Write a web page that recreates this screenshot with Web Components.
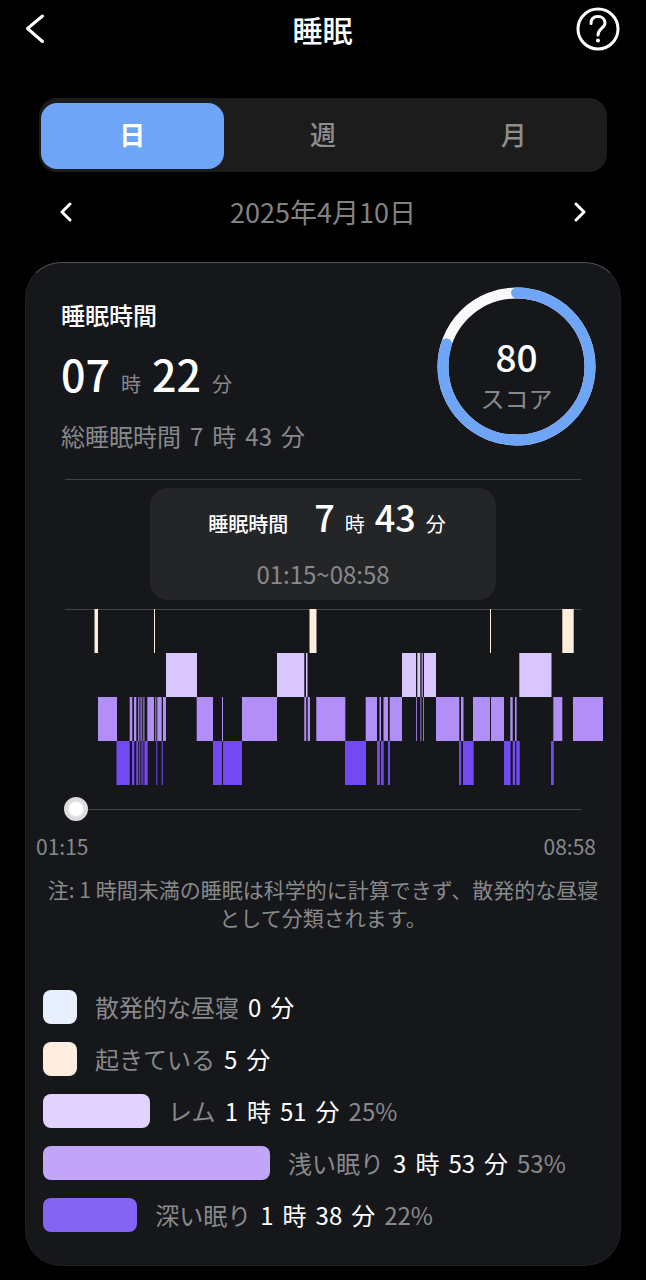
<!DOCTYPE html>
<html lang="ja">
<head>
<meta charset="utf-8">
<meta name="viewport" content="width=device-width, initial-scale=1">
<title>睡眠</title>
<style>
  body {
    margin: 0;
    background: #000;
    color: #fff;
    font-family: "Noto Sans CJK JP", sans-serif;
    --muted: #88898b;
    --accent: #6fa5f7;
    --line: #414244;
  }
</style>
</head>
<body>
<sleep-page>
  <top-bar slot="header">睡眠</top-bar>
  <period-tabs slot="header" labels="日,週,月" selected="日"></period-tabs>
  <date-nav slot="header">2025年4月10日</date-nav>

  <sleep-summary hours="07" minutes="22" total-hours="7" total-minutes="43">
    <score-ring slot="score" value="80">スコア</score-ring>
  </sleep-summary>
  <range-card hours="7" minutes="43">01:15~08:58</range-card>
  <stage-chart></stage-chart>
  <time-slider from="01:15" to="08:58"></time-slider>
  <span slot="note">注: 1 時間未満の睡眠は科学的に計算できず、散発的な昼寝として分類されます。</span>

  <stage-row slot="stages" color="#e8f0ff" value="0 分">散発的な昼寝</stage-row>
  <stage-row slot="stages" color="#ffeee0" value="5 分">起きている</stage-row>
  <stage-row slot="stages" color="#e1d2fe" value="1 時 51 分" share="25">レム</stage-row>
  <stage-row slot="stages" color="#c1a5f9" value="3 時 53 分" share="53">浅い眠り</stage-row>
  <stage-row slot="stages" color="#8465f3" value="1 時 38 分" share="22">深い眠り</stage-row>
</sleep-page>

<script>
// attaches an open shadow root holding the given markup
function attach(el, html) {
  const template = document.createElement('template');
  template.innerHTML = html;
  el.attachShadow({ mode: 'open' });
  el.shadowRoot.appendChild(template.content.cloneNode(true));
}

class SleepPage extends HTMLElement {
  constructor() {
    super();
    attach(this, `
      <style>
        :host { display: block; padding-bottom: 14px; }
        main {
          margin: 26px 25px 0;
          padding-bottom: 33px;
          border: 1px solid #1f2023;
          border-top-color: #505153;
          border-radius: 36px;
          background: #16171a;
        }
        p {
          margin: 15px 17px 0;
          font-size: 21px;
          line-height: 28px;
          text-align: center;
          color: var(--muted);
        }
        .stages {
          display: flex;
          flex-direction: column;
          gap: 18px;
          margin: 59px 17px 0;
        }
      </style>
      <slot name="header"></slot>
      <main>
        <slot></slot>
        <p><slot name="note"></slot></p>
        <div class="stages"><slot name="stages"></slot></div>
      </main>
    `);
  }
}

class TopBar extends HTMLElement {
  constructor() {
    super();
    attach(this, `
      <style>
        :host {
          display: grid;
          grid-template-columns: 1fr auto 1fr;
          align-items: center;
          height: 57px;
          padding: 0 25px 0 24px;
        }
        button {
          display: block;
          justify-self: start;
          padding: 0;
          border: 0;
          background: none;
          color: inherit;
        }
        h1 { margin: 0; font-size: 30px; line-height: 40px; font-weight: 500; }
        svg { display: block; fill: none; stroke: currentColor; stroke-linecap: round; stroke-linejoin: round; }
        .help { justify-self: end; }
      </style>
      <button aria-label="戻る">
        <svg width="24" height="32" viewBox="0 0 24 32" stroke-width="3"><path d="M18.500 3 3.500 15.500 18.500 28.500"/></svg>
      </button>
      <h1><slot></slot></h1>
      <button class="help" aria-label="ヘルプ">
        <svg width="46" height="46" viewBox="0 0 46 46" stroke-width="3">
          <circle cx="23" cy="23" r="20"/>
          <path d="M16 17.500C16 12.500 19 10.500 23 10.500S30 13 30 17C30 22 23 22.500 23 29"/>
          <circle cx="23" cy="34.500" r="2" fill="currentColor" stroke="none"/>
        </svg>
      </button>
    `);
  }
}

class PeriodTabs extends HTMLElement {
  constructor() {
    super();
    attach(this, `
      <style>
        :host {
          display: grid;
          grid-auto-flow: column;
          grid-auto-columns: 1fr;
          gap: 8px;
          margin: 41px 39px 0;
          padding: 5px 2px 3px;
          border-radius: 18px;
          background: #1c1c1c;
        }
        button {
          height: 66px;
          padding: 0 0 4px;
          border: 0;
          border-radius: 16px;
          background: none;
          color: #8e8e8e;
          font: 500 26px/36px "Noto Sans CJK JP", sans-serif;
        }
        button[aria-pressed="true"] { background: var(--accent); color: #fff; font-weight: 700; }
      </style>
    `);
    this.getAttribute('labels').split(',').forEach((label) => {
      const button = document.createElement('button');
      button.textContent = label;
      button.setAttribute('aria-pressed', label === this.getAttribute('selected'));
      button.addEventListener('click', () => this.select(button));
      this.shadowRoot.appendChild(button);
    });
  }

  select(button) {
    this.shadowRoot.querySelectorAll('button').forEach((b) => {
      b.setAttribute('aria-pressed', b === button);
    });
  }
}

class DateNav extends HTMLElement {
  constructor() {
    super();
    attach(this, `
      <style>
        :host {
          display: flex;
          align-items: center;
          justify-content: space-between;
          margin: 15px 42px 0;
          height: 49px;
          font-size: 27px;
          line-height: 40px;
          color: #828282;
        }
        button {
          display: flex;
          justify-content: center;
          width: 48px;
          padding: 0;
          border: 0;
          background: none;
          color: #fff;
        }
        svg { fill: none; stroke: currentColor; stroke-width: 3; stroke-linecap: round; stroke-linejoin: round; }
      </style>
      <button aria-label="前の日"><svg width="14" height="20" viewBox="0 0 14 20"><path d="M11 2 3 10 11 18"/></svg></button>
      <slot></slot>
      <button aria-label="次の日"><svg width="14" height="20" viewBox="0 0 14 20"><path d="M3 2 11 10 3 18"/></svg></button>
    `);
  }
}

class SleepSummary extends HTMLElement {
  constructor() {
    super();
    attach(this, `
      <style>
        :host {
          display: flex;
          justify-content: space-between;
          align-items: flex-start;
          margin: 0 39px;
          padding: 24px 0 27px;
          border-bottom: 1px solid var(--line);
        }
        .text { margin: 12px 0 0 -4px; }
        h2 { margin: 0; font-size: 24px; line-height: 32px; font-weight: 500; }
        .row { display: flex; align-items: baseline; color: var(--muted); }
        .main { gap: 11px; margin-top: 18px; font-size: 20px; line-height: 24px; }
        .main b { font-size: 43px; line-height: 48px; font-weight: 500; color: #fff; }
        .total { gap: 9px; margin-top: 23px; font-size: 24px; line-height: 32px; }
        ::slotted(*) { margin-right: -15px; }
      </style>
      <div class="text">
        <h2>睡眠時間</h2>
        <div class="row main"><b>${this.getAttribute('hours')}</b><span>時</span><b>${this.getAttribute('minutes')}</b><span>分</span></div>
        <div class="row total">
          <span>総睡眠時間</span><span>${this.getAttribute('total-hours')}</span><span>時</span><span>${this.getAttribute('total-minutes')}</span><span>分</span>
        </div>
      </div>
      <slot name="score"></slot>
    `);
  }
}

class ScoreRing extends HTMLElement {
  constructor() {
    super();
    const value = this.getAttribute('value');
    attach(this, `
      <style>
        :host { display: grid; width: 159px; height: 159px; }
        svg, .label { grid-area: 1 / 1; }
        .label {
          display: flex;
          flex-direction: column;
          align-items: center;
          padding-top: 45px;
          font-size: 24px;
          line-height: 36px;
          color: var(--muted);
        }
        b { font-size: 37px; line-height: 48px; font-weight: 500; color: #fff; }
      </style>
      <svg viewBox="0 0 160 160" fill="none" stroke-width="11" aria-hidden="true">
        <circle cx="80" cy="80" r="74" stroke="#fafafa"/>
        <circle cx="80" cy="80" r="74" stroke="#6fa5f7" stroke-linecap="round"
          pathLength="100" stroke-dasharray="${value} 100" transform="rotate(-90 80 80)"/>
      </svg>
      <div class="label"><b>${value}</b><slot></slot></div>
    `);
  }
}

class RangeCard extends HTMLElement {
  constructor() {
    super();
    attach(this, `
      <style>
        :host {
          display: block;
          width: fit-content;
          margin: 8px auto 0;
          padding: 4px 50px 10px;
          border-radius: 18px;
          background: #242527;
          text-align: center;
        }
        .row {
          display: flex;
          align-items: baseline;
          gap: 10px;
          padding-left: 8px;
          font-size: 20px;
          line-height: 24px;
        }
        h3 { margin: 0 16px 0 0; font-size: inherit; font-weight: 500; }
        b { font-size: 36px; line-height: 48px; font-weight: 500; }
        .range { margin-top: 18px; font-size: 24px; line-height: 32px; color: var(--muted); }
      </style>
      <div class="row">
        <h3>睡眠時間</h3><b>${this.getAttribute('hours')}</b><span>時</span><b>${this.getAttribute('minutes')}</b><span>分</span>
      </div>
      <div class="range"><slot></slot></div>
    `);
  }
}

// [start, end] of each stretch, on a 538 unit wide night
const STAGES = [
  { color: '#ffeedd', spans: [[29.500, 33], [89, 90], [244.500, 251.500], [425, 426], [497.300, 508.700]] },
  { color: '#d9c6fd', spans: [[101, 132], [212, 239.300], [241, 242.500], [337, 351], [352.300, 355.300], [356.700, 357.700], [359, 371], [454.300, 486.500]] },
  { color: '#b28ef7', spans: [[33, 52], [64.700, 67.300], [69, 71.300], [73, 73.800], [74.700, 75.500], [76.400, 77.200], [78.400, 79.400], [82.300, 89], [90.300, 91.300], [92.300, 96.700], [98, 101], [131.700, 148], [157, 158], [177, 212], [239.300, 241.200], [242.700, 245], [251.300, 280.300], [300.700, 312], [314.500, 316], [318.500, 323], [324.700, 337], [351.200, 352], [355.500, 356.300], [358, 358.800], [371, 394.300], [396, 398.500], [408, 425], [426, 439], [445.300, 447.700], [450, 451.600], [488.300, 497.300], [508, 538]] },
  { color: '#734af1', spans: [[51.500, 64.700], [67, 69.300], [71.300, 73.200], [74, 74.800], [75.700, 76.500], [77.300, 78.400], [79.400, 82.700], [91.300, 92.300], [96.700, 97.800], [148, 157], [158, 177], [280, 301], [312, 315], [316, 318.700], [323, 325], [394, 396.200], [398, 408.700], [439, 445.600], [447.700, 450.200], [451.400, 454.700], [486, 488.800]] }
];

class StageChart extends HTMLElement {
  constructor() {
    super();
    const bars = STAGES.map((stage, i) => stage.spans.map(([from, to]) =>
      `<path fill="${stage.color}" d="M${from} ${i * 44}H${to}v44H${from}z"/>`).join('')).join('');
    attach(this, `
      <style>
        :host { display: block; margin: 9px 17px 0 39px; }
        svg { display: block; width: 100%; height: 176px; }
      </style>
      <svg viewBox="0 0 538 176" preserveAspectRatio="none" role="img" aria-label="睡眠ステージ">
        <path d="M0 0H516V1H0z" fill="#414244"/>
        ${bars}
      </svg>
    `);
  }
}

class TimeSlider extends HTMLElement {
  constructor() {
    super();
    attach(this, `
      <style>
        :host { display: block; margin-top: 11px; }
        .track { display: flex; margin: 0 39px 0 38px; }
        input {
          -webkit-appearance: none;
          appearance: none;
          flex: 1;
          min-width: 0;
          height: 26px;
          margin: 0;
          background: linear-gradient(var(--line), var(--line)) center / 100% 1px no-repeat;
        }
        input::-webkit-slider-thumb {
          -webkit-appearance: none;
          box-sizing: border-box;
          width: 24px;
          height: 24px;
          border: 4px solid #dcdcdc;
          border-radius: 50%;
          background: #fff;
          box-shadow: inset 0 0 2px #bbb;
        }
        .ends {
          display: flex;
          justify-content: space-between;
          margin: 10px 24px 0 10px;
          font-size: 21px;
          line-height: 28px;
          color: var(--muted);
        }
      </style>
      <div class="track"><input type="range" min="0" max="463" value="0" aria-label="時刻"></div>
      <div class="ends"><span>${this.getAttribute('from')}</span><span>${this.getAttribute('to')}</span></div>
    `);
  }
}

class StageRow extends HTMLElement {
  constructor() {
    super();
    const share = this.getAttribute('share');
    const parts = this.getAttribute('value').split(' ').map((part) => `<span>${part}</span>`).join('');
    attach(this, `
      <style>
        :host {
          display: flex;
          align-items: center;
          gap: 9px;
          font-size: 24px;
          line-height: 34px;
          white-space: nowrap;
        }
        .bar {
          flex: none;
          width: calc(${share || 0} * 0.765%);
          min-width: 34px;
          height: 34px;
          margin-right: 9px;
          border-radius: 8px;
          background: ${this.getAttribute('color')};
        }
        .muted { color: var(--muted); }
      </style>
      <div class="bar"></div>
      <span class="muted"><slot></slot></span>
      ${parts}
      ${share ? `<span class="muted">${share}%</span>` : ''}
    `);
  }
}

window.customElements.define('sleep-page', SleepPage);
window.customElements.define('top-bar', TopBar);
window.customElements.define('period-tabs', PeriodTabs);
window.customElements.define('date-nav', DateNav);
window.customElements.define('sleep-summary', SleepSummary);
window.customElements.define('score-ring', ScoreRing);
window.customElements.define('range-card', RangeCard);
window.customElements.define('stage-chart', StageChart);
window.customElements.define('time-slider', TimeSlider);
window.customElements.define('stage-row', StageRow);
</script>
</body>
</html>
